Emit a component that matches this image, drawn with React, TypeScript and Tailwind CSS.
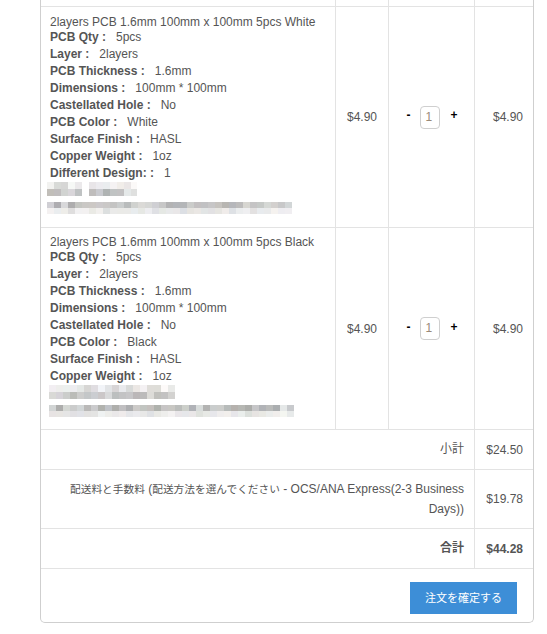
import React from 'react';

const font = { fontFamily: '"Liberation Sans", "Noto Sans CJK JP", Arial, sans-serif' };

type Attr = [string, string];

const whiteAttrs: Attr[] = [
  ['PCB Qty :', '5pcs'],
  ['Layer :', '2layers'],
  ['PCB Thickness :', '1.6mm'],
  ['Dimensions :', '100mm * 100mm'],
  ['Castellated Hole :', 'No'],
  ['PCB Color :', 'White'],
  ['Surface Finish :', 'HASL'],
  ['Copper Weight :', '1oz'],
  ['Different Design: :', '1'],
];

const blackAttrs: Attr[] = [
  ['PCB Qty :', '5pcs'],
  ['Layer :', '2layers'],
  ['PCB Thickness :', '1.6mm'],
  ['Dimensions :', '100mm * 100mm'],
  ['Castellated Hole :', 'No'],
  ['PCB Color :', 'Black'],
  ['Surface Finish :', 'HASL'],
  ['Copper Weight :', '1oz'],
];

// pseudo random so the blurred block looks the same every render
const rnd = (n: number) => {
  const x = Math.sin(n * 12.9898) * 43758.5453;
  return x - Math.floor(x);
};

function Mosaic({
  widths,
  gap = 7,
  cellH,
  tones,
  seed,
}: {
  widths: number[];
  gap?: number;
  cellH: number;
  tones: [number, number][];
  seed: number;
}) {
  return (
    <div className="flex" style={{ columnGap: gap }}>
      {widths.map((w, si) => {
        const count = Math.ceil(w / 7);
        return (
          <div key={si} className="flex flex-col">
            {tones.map(([base, spread], ri) => (
              <div key={ri} className="flex">
                {Array.from({ length: count }).map((_, ci) => {
                  const k = seed * 1000 + si * 100 + ri * 50 + ci;
                  const fade = ci > count - 3 ? 12 : 0;
                  const g = Math.min(250, Math.round(base + (rnd(k) - 0.5) * 2 * spread + fade));
                  const r = g + Math.round((rnd(k + 7) - 0.5) * 8);
                  const b = g + Math.round((rnd(k + 13) - 0.5) * 10);
                  const cw = ci === count - 1 ? w - 7 * (count - 1) : 7;
                  return (
                    <div
                      key={ci}
                      style={{ width: cw, height: cellH, background: `rgb(${r},${g},${b})` }}
                    />
                  );
                })}
              </div>
            ))}
          </div>
        );
      })}
    </div>
  );
}

function ProductRow({
  title,
  attrs,
  lineA,
  lineAOffset,
  seed,
  pad,
}: {
  title: string;
  attrs: Attr[];
  lineA: number[];
  lineAOffset: string;
  seed: number;
  pad: string;
}) {
  return (
    <div className="flex border-b border-[#e3e3e3]">
      <div className={`w-[294px] pl-[9px] pr-[8px] ${pad}`}>
        <div className="leading-[13px]">{title}</div>
        {attrs.map(([k, v]) => (
          <div key={k} className="leading-[17px]">
            <span className="font-bold mr-[10px]">{k}</span>
            <span>{v}</span>
          </div>
        ))}
        <div className={lineAOffset}>
          <Mosaic widths={lineA} cellH={7} tones={[[228, 16], [200, 22]]} seed={seed} />
        </div>
        <div className={`mt-[6px] ${lineAOffset}`}>
          <Mosaic widths={[245]} cellH={6} tones={[[196, 24], [232, 10]]} seed={seed + 5} />
        </div>
      </div>
      <div className="w-[53px] border-l border-[#e3e3e3] flex items-center justify-center">
        $4.90
      </div>
      <div className="w-[86px] border-l border-[#e3e3e3] flex items-center justify-center gap-[10px] pl-[1px]">
        <span className="text-black font-bold pb-[4px]">-</span>
        <div className="w-[20px] h-[23px] border border-[#cfcfcf] rounded-[4px] pl-[4px] text-[#9a8a78] leading-[21px]">
          1
        </div>
        <span className="text-black font-bold pb-[4px]">+</span>
      </div>
      <div className="w-[59px] border-l border-[#e3e3e3] flex items-center justify-end pr-[10px]">
        $4.90
      </div>
    </div>
  );
}

function SummaryRow({ label, value, bold = false }: { label: React.ReactNode; value: string; bold?: boolean }) {
  return (
    <div className={`flex border-b border-[#e3e3e3] ${bold ? 'font-bold' : ''}`}>
      <div className="w-[433px] py-[11px] pr-[10px] text-right leading-[17px]">{label}</div>
      <div className="w-[59px] border-l border-[#e3e3e3] flex items-center justify-end pr-[10px]">
        {value}
      </div>
    </div>
  );
}

export default function App() {
  return (
    <div className="min-h-[634px] bg-white text-[12px] text-[#555]" style={font}>
      <div className="ml-[40px] w-[494px] border-x border-b border-[#cfcfcf] rounded-b-[5px]">
        <div className="flex h-[7px] border-b border-[#e3e3e3]">
          <div className="w-[294px]" />
          <div className="w-[53px] border-l border-[#e3e3e3]" />
          <div className="w-[86px] border-l border-[#e3e3e3]" />
          <div className="w-[59px] border-l border-[#e3e3e3]" />
        </div>

        <ProductRow
          title="2layers PCB 1.6mm 100mm x 100mm 5pcs White"
          attrs={whiteAttrs}
          lineA={[35, 48]}
          lineAOffset="-ml-[3px]"
          seed={1}
          pad="pt-[9px] pb-[13px]"
        />
        <ProductRow
          title="2layers PCB 1.6mm 100mm x 100mm 5pcs Black"
          attrs={blackAttrs}
          lineA={[126]}
          lineAOffset="-ml-[1px]"
          seed={2}
          pad="pt-[8px] pb-[12px]"
        />

        <SummaryRow label="小計" value="$24.50" />

        <div className="flex border-b border-[#e3e3e3]">
          <div className="w-[433px] py-[9px] pl-[10px] pr-[10px] text-right leading-[20px]">
            <span className="text-[10.7px]">配送料と手数料</span> (
            <span className="text-[10.7px]">配送方法を選んでください</span> - OCS/ANA Express(2-3 Business Days))
          </div>
          <div className="w-[59px] border-l border-[#e3e3e3] flex items-center justify-end pr-[10px]">
            $19.78
          </div>
        </div>

        <SummaryRow label="合計" value="$44.28" bold />

        <div className="flex justify-end pt-[13px] pb-[8px] pr-[16px]">
          <button className="w-[107px] h-[32px] bg-[#3d8ed7] text-white text-[11px]">
            注文を確定する
          </button>
        </div>
      </div>
    </div>
  );
}
